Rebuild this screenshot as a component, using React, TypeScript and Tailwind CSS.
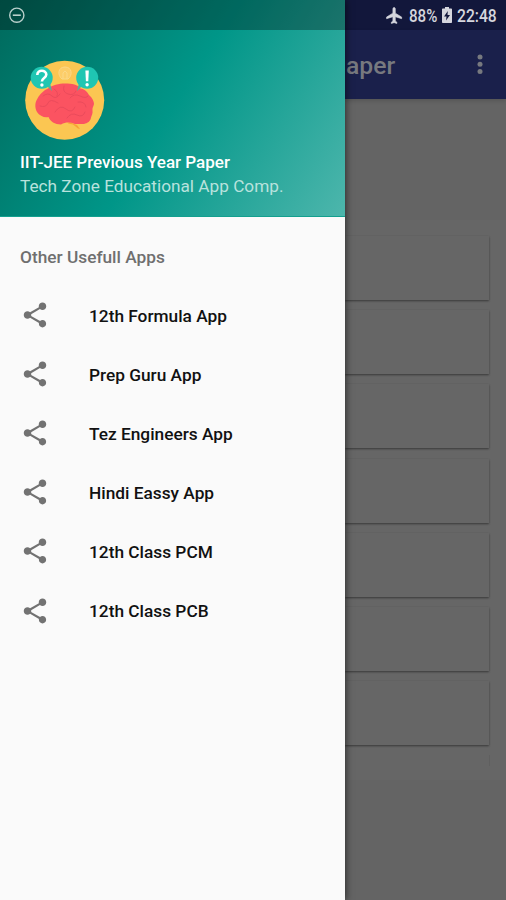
import React from "react";

const apps = [
  "12th Formula App",
  "Prep Guru App",
  "Tez Engineers App",
  "Hindi Eassy App",
  "12th Class PCM",
  "12th Class PCB",
];

function ShareIcon() {
  return (
    <svg viewBox="0 0 24 24" className="-mt-px ml-[19.7px] h-[30px] w-[30px] shrink-0" fill="#727272">
      <path d="M18 16.08c-.76 0-1.44.3-1.96.77L8.91 12.7c.05-.23.09-.46.09-.7s-.04-.47-.09-.7l7.05-4.11c.54.5 1.25.81 2.04.81 1.66 0 3-1.34 3-3s-1.34-3-3-3-3 1.34-3 3c0 .24.04.47.09.7L8.04 9.81C7.5 9.31 6.79 9 6 9c-1.66 0-3 1.34-3 3s1.34 3 3 3c.79 0 1.5-.31 2.04-.81l7.12 4.16c-.05.21-.08.43-.08.65 0 1.61 1.31 2.92 2.92 2.92s2.92-1.31 2.92-2.92-1.31-2.92-2.92-2.92z" />
    </svg>
  );
}

function BrainLogo() {
  return (
    <svg viewBox="0 0 80 80" className="ml-[25px] mt-[30px] h-[80px] w-[80px] shrink-0 overflow-visible">
      <circle cx="39.7" cy="40.2" r="39.5" fill="#fbc652" />
      <path d="M37 19c-5-4-4-12 3-12s8 8 3 12zM38 19v-6l2-2 2 2v6" fill="#fccd68" stroke="#fbd887" strokeWidth="1" />
      <path d="M44 62l8 3 3 4-2-.5-5-4-5-1z" fill="#f9a136" />
      <path
        d="M23 28.500c4-3.500 11-5 17-5 7 0 13 1 15.500 5 4 .5 7 3.500 8.500 6.500 3.500 3 5 6.500 5 9-.5 2.500-2 4-1.500 6.500.5 3-1 5-1.500 7-.5 4-3.500 5.500-7 6.500h-9c-6-2-9-2-14 .5-6 0-11-3-12.500-7.500-4 1-9-1-11.500-5-2.500-4.500-2-10 .5-13.500 2.500-4.500 6.500-8.500 10.500-10z"
        fill="#fb5361"
      />
      <path
        d="M18 36q5-4 9 0t8-2M29 29q5 3 3 7M39 26q-2 6 4 8t8-3M45 38q4-5 10-2t8 0M15 46q6 2 8-3t10 0M30 52q5-8 11-3t9-2M42 58q4-6 10-3t8-3M53 42q7-1 8 5"
        fill="none"
        stroke="#e84a5a"
        strokeWidth="0.9"
        strokeLinecap="round"
      />
      <path d="M20 24l7 7-2-8zM59 24l-7 7 2-8z" fill="#4fb39b" />
      <circle cx="16.700" cy="17.700" r="11" fill="#1fc6b2" />
      <circle cx="62.200" cy="17.700" r="11" fill="#1fc6b2" />
      <path d="M12.300 14.900c0-5.500 9-5.500 9-.3 0 3.600-4.400 3.300-4.400 7" fill="none" stroke="#fff" strokeWidth="2.6" />
      <circle cx="16.900" cy="25" r="1.700" fill="#fff" />
      <path d="M60.400 10.500h3.400l-.5 10.700h-2.400z" fill="#fff" />
      <circle cx="62.100" cy="24.800" r="1.700" fill="#fff" />
    </svg>
  );
}

function Drawer() {
  return (
    <aside className="z-10 flex h-[900px] w-[345px] shrink-0 flex-col bg-[#fafafa] shadow-[1px_0_7px_rgba(0,0,0,0.55)]">
      <header className="flex h-[217px] shrink-0 flex-col border-b border-[#13a08f] bg-[linear-gradient(122.2deg,#00695c,#009688_50%,#4db6ac)]">
        <div className="flex h-[30px] shrink-0 items-center bg-black/30 pl-[8px]">
          <svg viewBox="0 0 18 18" className="h-[18px] w-[18px]" fill="none" stroke="#b9d0cc">
            <circle cx="8.8" cy="9.2" r="7.1" strokeWidth="1.4" />
            <path d="M4.8 9.2h8" strokeWidth="1.6" />
          </svg>
        </div>
        <BrainLogo />
        <div className="mt-[10px] pl-[20px] text-[17.3px] leading-[24px] whitespace-nowrap">
          <div className="font-medium text-white">
            <span className="inline-block origin-left scale-x-[0.984]">IIT-JEE Previous Year Paper</span>
          </div>
          <div className="text-[#b8e2dd]">
            <span className="inline-block origin-left scale-x-[0.996]">Tech Zone Educational App Comp.</span>
          </div>
        </div>
      </header>
      <h2 className="mt-[28px] h-[24px] pl-[20px] text-[17.3px] leading-[24px] font-medium text-[#6f6f6f]">Other Usefull Apps</h2>
      <nav className="mt-[17px] flex flex-col">
        {apps.map((name) => (
          <a key={name} className="flex h-[59.1px] items-center">
            <ShareIcon />
            <span className="ml-[39.3px] text-[17.3px] leading-[24px] font-medium text-[#111]">{name}</span>
          </a>
        ))}
      </nav>
    </aside>
  );
}

function DimmedPage() {
  return (
    <main className="flex h-[900px] w-[161px] shrink-0 flex-col bg-[#646464]">
      <div className="flex h-[30px] shrink-0 items-center bg-[#12173b] text-[#d5d6dd]">
        <svg viewBox="0 0 24 24" className="ml-[40px] h-[19px] w-[19px]" fill="currentColor" stroke="currentColor" strokeWidth="0.8">
          <path d="M21 16v-2l-8-5V3.500c0-.83-.67-1.500-1.500-1.500S10 2.670 10 3.500V9l-8 5v2l8-2.500V19l-2 1.500V22l3.500-1 3.500 1v-1.500L13 19v-5.500l8 2.500z" />
        </svg>
        <span className="ml-[5px] w-[30px] pt-[2px] text-[18px] leading-[30px] font-medium whitespace-nowrap">
          <span className="inline-block origin-left scale-x-[0.84]">88%</span>
        </span>
        <svg viewBox="0 0 10 16" className="ml-[3px] h-[16px] w-[10px]">
          <path d="M3 0h4v1.500h2.200q.8 0 .8.8v12.900q0 .8-.8.8H.8q-.8 0-.8-.8V2.300q0-.8.8-.8H3z" fill="currentColor" />
          <path d="M5.800 4L2 9.500h2.500L4 13.500 8 8H5.500z" fill="#12173b" />
        </svg>
        <span className="ml-[5px] pt-[2px] text-[18px] leading-[30px] font-medium whitespace-nowrap">
          <span className="inline-block origin-left scale-x-[0.87]">22:48</span>
        </span>
      </div>
      <div className="flex h-[69px] shrink-0 items-center justify-between bg-[#1a204b] pr-[22px] text-[#77797f] shadow-[0_2px_4px_rgba(0,0,0,0.15)]">
        <span className="pt-[3px] pl-px text-[24.7px] leading-[30px] font-medium">aper</span>
        <svg viewBox="0 0 8 24" className="mt-px h-[24px] w-[8px]" fill="#77797f">
          <circle cx="4" cy="4" r="2.500" />
          <circle cx="4" cy="11.300" r="2.500" />
          <circle cx="4" cy="18.600" r="2.500" />
        </svg>
      </div>
      <div className="mt-[121px] flex h-[560px] shrink-0 flex-col gap-[10.2px] overflow-hidden bg-[#666] pt-[16px]">
        {[0, 1, 2, 3, 4, 5, 6].map((n) => (
          <div key={n} className="mr-[17px] h-[64px] shrink-0 bg-[#666] shadow-[0_1px_2px_rgba(0,0,0,0.45)]" />
        ))}
        <div className="mr-[16px] h-[11px] shrink-0 border-r border-[#5f5f5f]" />
      </div>
    </main>
  );
}

export default function App() {
  return (
    <div className="flex h-[900px] w-[506px] overflow-hidden bg-[#646464] font-[Roboto,'Liberation_Sans',sans-serif]">
      <Drawer />
      <DimmedPage />
    </div>
  );
}
